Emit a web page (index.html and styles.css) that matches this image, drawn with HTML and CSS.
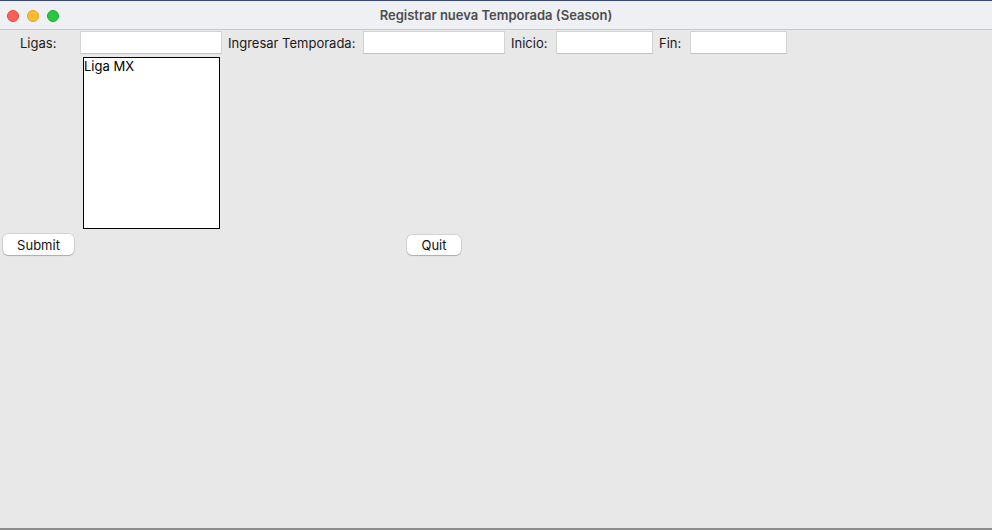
FILE: index.html
```html
<!DOCTYPE html>
<html lang="es">
<head>
<meta charset="utf-8">
<title>Registrar nueva Temporada (Season)</title>
<link rel="stylesheet" href="styles.css">
</head>
<body>
<div class="window">
  <div class="titlebar">
    <div class="lights">
      <span class="light red"></span>
      <span class="light yellow"></span>
      <span class="light green"></span>
    </div>
    <div class="title">Registrar nueva Temporada (Season)</div>
  </div>
  <div class="content">
    <div class="row">
      <label class="lbl lbl-ligas">Ligas:</label>
      <input class="field wide" type="text">
      <label class="lbl lbl-temp">Ingresar Temporada:</label>
      <input class="field wide" type="text">
      <label class="lbl lbl-inicio">Inicio:</label>
      <input class="field narrow" type="text">
      <label class="lbl lbl-fin">Fin:</label>
      <input class="field narrow" type="text">
    </div>
    <div class="listbox">
      <div class="item">Liga MX</div>
    </div>
    <div class="buttons">
      <button class="btn btn-submit">Submit</button>
      <button class="btn btn-quit">Quit</button>
    </div>
  </div>
</div>
</body>
</html>
```
FILE: styles.css
```css
html, body {
  margin: 0;
  padding: 0;
}
body {
  width: 992px;
  height: 530px;
  overflow: hidden;
  background: #e8e8e8;
  font-family: Inter, "Liberation Sans", sans-serif;
  font-size: 13px;
  color: #1a1a1a;
}
.window {
  height: 530px;
  display: flex;
  flex-direction: column;
  box-sizing: border-box;
  border-top: 1px solid #3b4a78;
  border-bottom: 2px solid #8c8c8c;
}
.titlebar {
  height: 28px;
  background: #eff0f4;
  border-bottom: 1px solid #c9c9cc;
  display: flex;
  align-items: center;
  position: relative;
}
.lights {
  display: flex;
  gap: 8px;
  padding-left: 7px;
  padding-top: 1px;
}
.light {
  width: 12px;
  height: 12px;
  border-radius: 50%;
  box-sizing: border-box;
}
.red { background: #fe5f57; border: 0.5px solid #e2463f; }
.yellow { background: #febc2e; border: 0.5px solid #e0a123; }
.green { background: #28c840; border: 0.5px solid #1daa2c; }
.title {
  position: absolute;
  left: 0;
  right: 0;
  top: 0;
  line-height: 28px;
  text-align: center;
  font-weight: 600;
  color: #4d4d4d;
  font-size: 13px;
}
.content {
  flex: 1;
  background: #e8e8e8;
}
.row {
  display: flex;
  align-items: center;
  margin-top: 1px;
  height: 23px;
}
.lbl {
  box-sizing: border-box;
  white-space: nowrap;
}
.lbl-ligas { width: 80px; padding-left: 20px; }
.lbl-temp { width: 135px; margin-left: 6px; }
.lbl-inicio { width: 45px; margin-left: 6px; }
.lbl-fin { width: 31px; margin-left: 6px; }
.field {
  box-sizing: border-box;
  height: 23px;
  background: #fff;
  border: 1px solid #d4d4d4;
  border-bottom-color: #c2c2c2;
  margin: 0;
  padding: 0 4px;
  font: inherit;
  outline: none;
}
.wide { width: 142px; }
.narrow { width: 97px; }
.listbox {
  box-sizing: border-box;
  width: 137px;
  height: 172px;
  margin-left: 83px;
  margin-top: 3px;
  background: #fff;
  border: 1px solid #000;
}
.item {
  padding-left: 0;
  line-height: 17px;
  color: #000;
}
.buttons {
  display: flex;
  align-items: flex-start;
  margin-top: 5px;
  padding-left: 3px;
}
.btn {
  box-sizing: border-box;
  height: 21px;
  background: #fff;
  border: none;
  border-radius: 5px;
  box-shadow: 0 0 0 0.5px rgba(0,0,0,0.18), 0 1px 1px rgba(0,0,0,0.18);
  font: inherit;
  color: #111;
  padding: 0;
}
.btn-submit { width: 71px; }
.btn-quit { width: 54px; margin-left: 333px; margin-top: 1px; height: 20px; }
```
